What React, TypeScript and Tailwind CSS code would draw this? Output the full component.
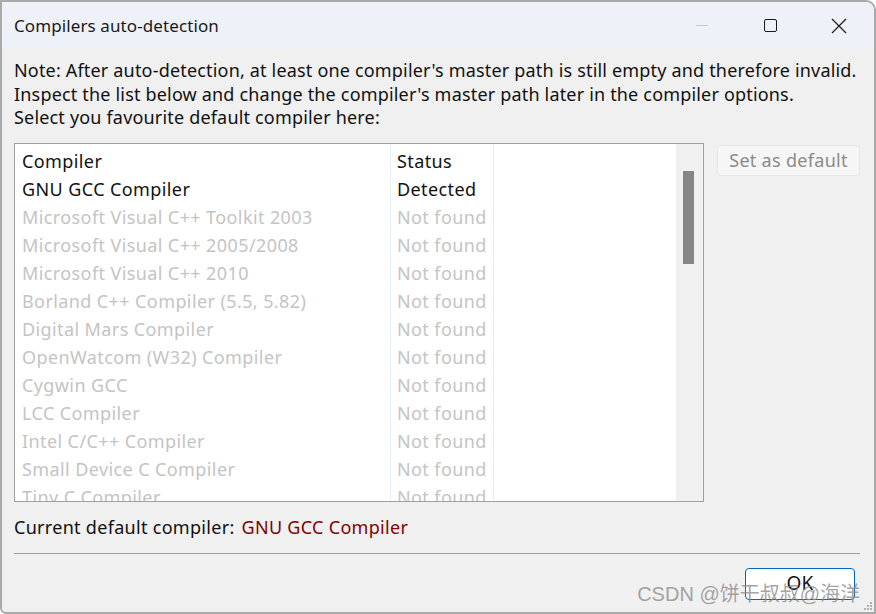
import React from 'react';

const rows: { name: string; status: string; found: boolean }[] = [
  { name: 'GNU GCC Compiler', status: 'Detected', found: true },
  { name: 'Microsoft Visual C++ Toolkit 2003', status: 'Not found', found: false },
  { name: 'Microsoft Visual C++ 2005/2008', status: 'Not found', found: false },
  { name: 'Microsoft Visual C++ 2010', status: 'Not found', found: false },
  { name: 'Borland C++ Compiler (5.5, 5.82)', status: 'Not found', found: false },
  { name: 'Digital Mars Compiler', status: 'Not found', found: false },
  { name: 'OpenWatcom (W32) Compiler', status: 'Not found', found: false },
  { name: 'Cygwin GCC', status: 'Not found', found: false },
  { name: 'LCC Compiler', status: 'Not found', found: false },
  { name: 'Intel C/C++ Compiler', status: 'Not found', found: false },
  { name: 'Small Device C Compiler', status: 'Not found', found: false },
  { name: 'Tiny C Compiler', status: 'Not found', found: false },
];

const TitleBar = () => (
  <div className="h-[47px] bg-[#eef1f7] flex items-center pl-[12px] rounded-tr-[8px]">
    <span className="text-[17px] text-[#1a1a1a] flex-1 tracking-[0.1px]">Compilers auto-detection</span>
    <div className="flex items-center h-full">
      <div className="w-[68px] h-full flex items-center justify-center">
        <div className="w-[12px] h-px bg-[#c8c8c8]" />
      </div>
      <div className="w-[68px] h-full flex items-center justify-center">
        <div className="w-[13px] h-[13px] border border-[#1a1a1a] rounded-[2px]" />
      </div>
      <div className="w-[70px] h-full flex items-center justify-center">
        <svg width="16" height="16" viewBox="0 0 16 16" fill="none" stroke="#1a1a1a" strokeWidth="1.2">
          <path d="M1 1L15 15M15 1L1 15" />
        </svg>
      </div>
    </div>
  </div>
);

const CompilerList = () => (
  <div className="relative w-[690px] h-[359px] border border-[#a0a0a0] bg-white overflow-hidden">
    <div className="absolute left-[375px] top-0 bottom-0 w-px bg-[#e6eef8]" />
    <div className="absolute left-[478px] top-0 bottom-0 w-px bg-[#e6eef8]" />
    <div className="pt-[4px] tracking-[0.4px]">
      <div className="flex h-[28px] items-center text-[#111]">
        <span className="w-[375px] pl-[7px]">Compiler</span>
        <span className="pl-[7px]">Status</span>
      </div>
      {rows.map((r) => (
        <div key={r.name} className={`flex h-[28px] items-center whitespace-nowrap ${r.found ? 'text-[#111]' : 'text-[#c4c4c4]'}`}>
          <span className="w-[375px] pl-[7px]">{r.name}</span>
          <span className="pl-[7px]">{r.status}</span>
        </div>
      ))}
    </div>
    <div className="absolute right-0 top-0 bottom-0 w-[27px] bg-[#f0f0f0]">
      <div className="absolute left-[7px] top-[27px] w-[11px] h-[93px] bg-[#858585]" />
    </div>
  </div>
);

export default function App() {
  return (
    <div
      className="w-[876px] h-[614px] bg-[#f0f0f0] border-2 border-[#aaaaaa] rounded-tr-[10px] rounded-bl-[6px] overflow-hidden flex flex-col relative"
      style={{ fontFamily: '"Noto Sans", "Noto Sans CJK SC", sans-serif' }}
    >
      <TitleBar />
      <div className="flex-1 pl-[12px] pr-[14px] text-[18px] tracking-[0.3px]">
        <div className="pt-[10px] leading-[23.5px] text-[#111] tracking-[0.18px]">
          <p>Note: After auto-detection, at least one compiler's master path is still empty and therefore invalid.</p>
          <p>Inspect the list below and change the compiler's master path later in the compiler options.</p>
          <p>Select you favourite default compiler here:</p>
        </div>
        <div className="flex mt-[13px] gap-[13px] items-start">
          <CompilerList />
          <button className="mt-[2px] w-[143px] h-[31px] bg-[#f6f6f6] border border-[#e6e6e6] rounded-[4px] text-[#8a8a8a]">
            Set as default
          </button>
        </div>
        <div className="mt-[14px] flex h-[23px] items-center">
          <span className="text-[#111]">Current default compiler:</span>
          <span className="ml-[7px] text-[#800000]">GNU GCC Compiler</span>
        </div>
        <div className="mt-[14px] h-px bg-[#a0a0a0] w-[846px]" />
        <div className="flex justify-end pr-[5px] mt-[14px]">
          <button className="w-[110px] h-[32px] bg-white border border-[#0067c0] rounded-[4px] text-[#111] text-[19px]">OK</button>
        </div>
      </div>
      <div className="absolute right-[14px] bottom-[3px] text-[20px] text-[#8c8c8c]/80 pointer-events-none" style={{ fontFamily: '"Liberation Sans", "Noto Sans CJK SC", sans-serif' }}>
        CSDN @饼干叔叔@海洋
      </div>
      <svg className="absolute right-[1px] bottom-[1px]" width="10" height="10" viewBox="0 0 10 10" fill="#b0b0b0">
        <rect x="7" y="1" width="2" height="2" />
        <rect x="4" y="4" width="2" height="2" />
        <rect x="7" y="4" width="2" height="2" />
        <rect x="1" y="7" width="2" height="2" />
        <rect x="4" y="7" width="2" height="2" />
        <rect x="7" y="7" width="2" height="2" />
      </svg>
    </div>
  );
}
